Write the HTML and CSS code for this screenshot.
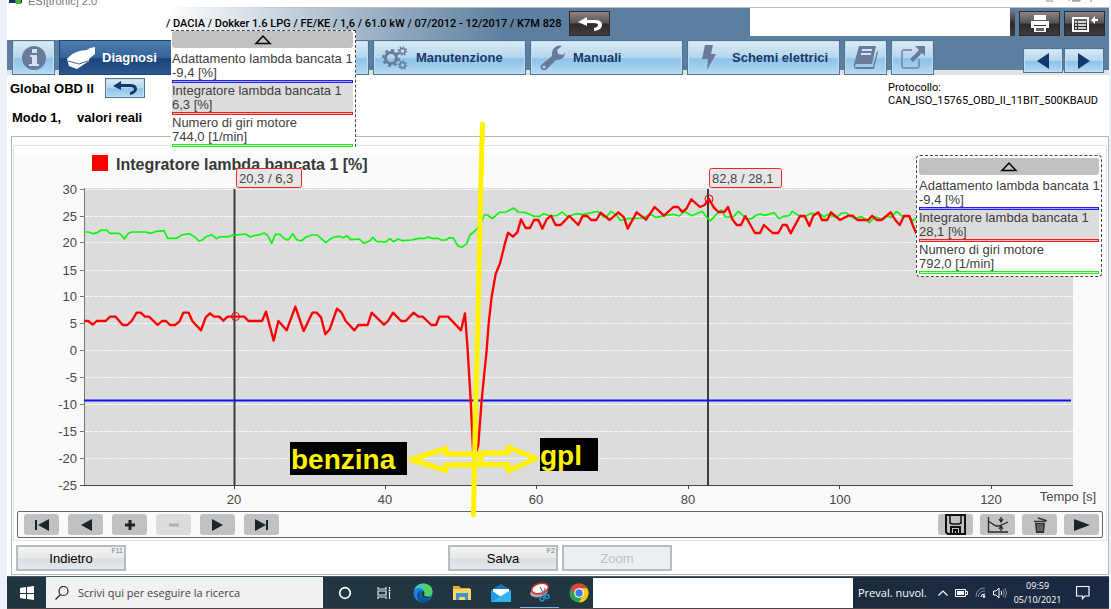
FILE: index.html
```html
<!DOCTYPE html>
<html lang="it">
<head>
<meta charset="utf-8">
<title>ESI[tronic] 2.0</title>
<link rel="stylesheet" href="styles.css">
</head>
<body>
<div class="window">
  <div class="titlebar">
    <svg class="app-icon" width="13" height="4" viewBox="0 0 13 4"><path d="M0 0h13v3H0z" fill="#15306b"/><path d="M6 0h6v4H7z" fill="#3ab52a"/></svg>
    <span class="title-text">ESI[tronic] 2.0</span>
    <svg class="win-controls" width="52" height="3" viewBox="0 0 52 3"><path d="M1 1h7M24 0v1M27 0h8v1h-8M46 0v2" stroke="#888" fill="none"/></svg>
  </div>

  <header class="vehicle-bar">
    <span class="vehicle">/ DACIA / Dokker 1.6 LPG / FE/KE / 1,6 / 61.0 kW / 07/2012 - 12/2017 / K7M 828</span>
    <button class="dark-btn" aria-label="Cambia veicolo"><svg width="26" height="16" viewBox="0 0 26 16"><path d="M1 6l9-5v3h8q7 0 7 5 0 5-8 6v-3q4-1 4-3 0-2-4-2h-7v3z" fill="#fff"/></svg></button>
    <div class="blank-top"></div>
    <div class="dark-sliver"></div>
    <button class="dark-btn" aria-label="Stampa"><svg width="20" height="18" viewBox="0 0 20 18"><path d="M4 0h12v5H4zM1 6h18v7h-3v-3H4v3H1z" fill="#fff"/><path d="M4 11h12v6H4z" fill="#fff"/><path d="M6 13h8v3H6z" fill="#6b6666"/></svg></button>
    <button class="dark-btn" aria-label="Elenco"><svg width="28" height="18" viewBox="0 0 28 18"><path d="M2 3h15v13H2z" fill="none" stroke="#fff" stroke-width="2"/><path d="M4 7h2m1 0h8M4 10h2m1 0h8M4 13h2m1 0h8" stroke="#fff" stroke-width="1.6"/><path d="M20 5l4-4v3h3v2h-3v3z" fill="#fff"/></svg></button>
  </header>

  <nav class="tabs">
    <button class="tab tab-icon" aria-label="Informazioni"><svg width="26" height="26" viewBox="0 0 26 26"><circle cx="13" cy="13" r="12" fill="#687b9a"/><path d="M11 4h5v4h-5zM9 10h7v9h2v2H8v-2h3v-7H9z" fill="#cfe3f4"/></svg></button>
    <button class="tab active"><svg width="30" height="24" viewBox="0 0 30 24"><path d="M1 13l2 7 8 3 12-8-9-10q-7 1-13 8z" fill="#fff"/><path d="M13 5l8-1 3-2 5-1v7l-5 4-2 3z" fill="#fff"/><path d="M2 15l11 3 9-3" fill="none" stroke="#42699a"/></svg><span>Diagnosi</span></button>
    <button class="tab" aria-label="Ricerca guasti"></button>
    <button class="tab"><svg width="26" height="24" viewBox="0 0 26 24"><g fill="none" stroke="#687b9a"><circle cx="9" cy="12" r="5.5" stroke-width="3"/><circle cx="9" cy="12" r="7.8" stroke-width="2.4" stroke-dasharray="3 3.1"/><circle cx="20.500" cy="5" r="2.600" stroke-width="1.500"/><circle cx="20.500" cy="5" r="4" stroke-width="1.500" stroke-dasharray="1.600 1.500"/><circle cx="20.500" cy="19" r="2.600" stroke-width="1.500"/><circle cx="20.500" cy="19" r="4" stroke-width="1.500" stroke-dasharray="1.600 1.500"/></g></svg><span>Manutenzione</span></button>
    <button class="tab"><svg width="26" height="26" viewBox="0 0 26 26"><path d="M2 20L13 11q-1-7 5-10 3-1 5 0l-5 4 1 4 5 1 2-3q0 8-9 8L7 25q-3 1-5-1-1-2 0-4z" fill="#687b9a"/><circle cx="5" cy="22" r="1.500" fill="#b4d5ef"/></svg><span>Manuali</span></button>
    <button class="tab tab-wide"><svg width="14" height="25" viewBox="0 0 14 25"><path d="M3 0h8L9 9h5L5 25l1-11H0z" fill="#687b9a"/></svg><span>Schemi elettrici</span></button>
    <button class="tab tab-icon" aria-label="Libro"><svg width="26" height="26" viewBox="0 0 26 26"><path d="M6 1h17l-4 18H4q-2 0-2 2t2 1h16l4-16 1 1-4 17H3q-3-1-2-5z" fill="#687b9a"/><path d="M9 5h10M8 9h10" stroke="#cfe3f4" stroke-width="2"/></svg></button>
    <button class="tab tab-icon" aria-label="Apri"><svg width="26" height="24" viewBox="0 0 26 24"><path d="M12 4H4Q2 4 2 6v14q0 2 2 2h13q2 0 2-2v-7" fill="none" stroke="#8295b0" stroke-width="2"/><path d="M15 0h10v10l-3-3-9 9-3-3 9-9z" fill="#687b9a"/></svg></button>
    <div class="history">
      <button class="blue-btn" aria-label="Precedente"><svg width="12" height="16" viewBox="0 0 12 16"><path d="M12 0v16L0 8z" fill="#12386e"/></svg></button>
      <button class="blue-btn" aria-label="Successivo"><svg width="12" height="16" viewBox="0 0 12 16"><path d="M0 0v16l12-8z" fill="#12386e"/></svg></button>
    </div>
  </nav>

  <section class="context">
    <div class="context-left">
      <div class="context-row"><strong>Global OBD II</strong><button class="blue-btn back" aria-label="Torna"><svg width="24" height="14" viewBox="0 0 24 14"><path d="M0 5l8-5v3h9q7 0 7 5 0 4-7 6v-3q4-1 4-3t-4-2H8v3z" fill="#12386e"/></svg></button></div>
      <div class="context-mode"><strong>Modo 1,</strong><strong>valori reali</strong></div>
    </div>
    <div class="protocol">Protocollo:<br>CAN_ISO_15765_OBD_II_11BIT_500KBAUD</div>
  </section>

  <main class="panel">
    <div class="chart-frame">
      <div class="chart">
        <svg class="plot" viewBox="14 153 1092 357">
          <rect x="84" y="188" width="989" height="298" fill="#dcdcdc"/>
          <path class="grid" d="M84 189.500H1073M84 216.500H1073M84 242.500H1073M84 270.500H1073M84 296.500H1073M84 323.500H1073M84 350.500H1073M84 377.500H1073M84 404.500H1073M84 431.500H1073M84 458.500H1073"/>
          <path d="M84.500 188V486M80 189.500h4M80 216.500h4M80 242.500h4M80 270.500h4M80 296.500h4M80 323.500h4M80 350.500h4M80 377.500h4M80 404.500h4M80 431.500h4M80 458.500h4" stroke="#777" fill="none"/>
          <path d="M80 485.500H1073M234.500 485v4M385.500 485v4M536.500 485v4M688.500 485v4M839.500 485v4M991.500 485v4" stroke="#444" fill="none"/>
          <g class="axis" text-anchor="end">
            <text x="77" y="194">30</text><text x="77" y="221">25</text><text x="77" y="247">20</text><text x="77" y="275">15</text><text x="77" y="301">10</text><text x="77" y="328">5</text><text x="77" y="355">0</text><text x="77" y="382">-5</text><text x="77" y="409">-10</text><text x="77" y="436">-15</text><text x="77" y="463">-20</text><text x="77" y="490">-25</text>
          </g>
          <g class="axis" text-anchor="middle">
            <text x="234" y="504">20</text><text x="385" y="504">40</text><text x="536" y="504">60</text><text x="688" y="504">80</text><text x="840" y="504">100</text><text x="991" y="504">120</text><text x="1068" y="501">Tempo [s]</text>
          </g>
          <rect x="92" y="155" width="16" height="16" fill="#f00"/>
          <text class="chart-title" x="116" y="170">Integratore lambda bancata 1 [%]</text>
          <path d="M234.500 189V485M708 189V485" stroke="#3c4040" stroke-width="2"/>
          <path d="M84 400.500H1071" stroke="#1010f0" stroke-width="2"/>
          <g transform="translate(0 150) scale(.33333)" fill="none" stroke-linejoin="round">
            <polyline stroke="#0cf50c" stroke-width="5" points="252,246 265,246 280,251 292,248 303,240 320,240 330,250 357,250 365,256 373,267 385,250 395,246 437,246 453,250 470,244 492,242 503,265 530,265 545,255 568,251 583,260 597,273 607,270 618,260 634,254 650,266 658,261 686,260 695,256 737,252 750,261 765,256 780,254 792,249 803,256 815,280 826,253 840,253 850,264 862,270 867,268 878,251 890,269 904,273 917,262 935,255 952,255 963,265 978,278 990,267 1003,261 1018,259 1030,263 1040,257 1052,269 1078,267 1092,280 1110,272 1118,262 1130,274 1157,276 1170,266 1180,275 1195,267 1207,272 1235,270 1255,265 1275,265 1285,261 1298,265 1315,265 1323,270 1338,270 1348,263 1360,264 1373,287 1385,292 1400,281 1410,255 1428,240 1440,226 1453,195 1463,195 1477,206 1498,187 1518,186 1541,174 1555,186 1578,188 1602,199 1620,199 1631,191 1650,198 1670,197 1687,186 1702,200 1728,191 1750,193 1793,184 1810,200 1820,200 1833,184 1850,196 1860,211 1885,206 1930,204 1950,193 1968,202 1995,197 2020,193 2038,198 2053,184 2075,197 2107,184 2120,202 2132,212 2150,192 2164,180 2176,201 2200,201 2215,184 2240,207 2255,206 2270,195 2282,192 2295,196 2323,188 2337,206 2350,199 2367,197 2377,184 2400,199 2415,200 2432,190 2460,192 2472,201 2482,193 2510,202 2525,189 2540,189 2552,200 2565,205 2585,200 2608,218 2625,200 2645,207 2660,198 2675,202 2689,184 2710,201 2725,198 2738,212 2750,204"/>
            <polyline stroke="#f00" stroke-width="7" points="252,513 265,513 278,524 290,513 317,513 330,500 347,500 368,525 382,525 395,513 410,488 422,488 435,500 447,500 473,525 486,513 498,513 510,525 525,525 538,515 550,488 566,488 577,513 603,541 617,502 630,490 642,500 658,500 670,512 683,500 733,500 745,513 786,513 798,485 821,572 835,513 860,541 886,470 911,543 937,488 950,488 963,502 976,553 989,538 1011,476 1024,487 1037,513 1063,541 1075,525 1103,525 1115,488 1152,524 1164,513 1179,488 1203,513 1217,513 1241,488 1255,500 1268,500 1294,525 1308,525 1318,500 1344,500 1383,541 1395,490 1403,600 1412,750 1420,920 1424,925 1435,885 1445,750 1460,600 1466,520 1475,440 1487,372 1500,340 1515,280 1524,248 1539,260 1552,247 1563,208 1577,234 1590,234 1602,210 1615,210 1627,236 1640,208 1653,197 1667,225 1682,225 1708,198 1735,225 1748,198 1762,198 1773,210 1789,210 1802,188 1829,210 1855,187 1872,202 1883,236 1910,187 1938,209 1964,171 1992,197 2020,171 2034,171 2047,186 2060,175 2074,148 2100,171 2114,165 2127,147 2142,173 2155,186 2173,186 2184,171 2197,208 2210,225 2223,225 2236,198 2265,249 2280,249 2292,225 2318,249 2335,249 2348,225 2360,225 2372,250 2400,198 2414,198 2428,228 2440,197 2455,187 2466,210 2482,210 2493,187 2520,210 2545,197 2558,197 2572,210 2605,210 2616,197 2630,210 2645,210 2672,187 2686,210 2699,225 2712,198 2728,198 2738,225 2750,252"/>
          </g>
          <circle cx="235.500" cy="316.500" r="4" fill="none" stroke="#e00"/>
          <circle cx="709" cy="199" r="4" fill="none" stroke="#e00"/>
          <g fill="#e6e6e6" stroke="#f22"><rect x="236.500" y="168.500" width="65" height="19" rx="2"/><rect x="709.500" y="168.500" width="72" height="19" rx="2"/></g>
          <g class="axis"><text x="239" y="183">20,3 / 6,3</text><text x="712" y="183">82,8 / 28,1</text></g>
          <g fill="none" stroke="#fff200" stroke-width="5" stroke-linejoin="round" stroke-linecap="round">
            <path d="M482.500 124L481.500 160 480 220 478 320 475.500 410 473.500 515"/>
            <path d="M478 454H446v-5.500L411 459.500l35 11V465H478M481 453h27v-6l28 11.500-28 12.500v-6.500H481z"/>
          </g>
          <rect x="290" y="442" width="117" height="33"/>
          <rect x="540" y="438" width="58" height="33"/>
          <g class="note"><text x="291" y="469">benzina</text><text x="540" y="465">gpl</text></g>
        </svg>
        <div class="legend legend-right">
          <button class="legend-handle" aria-label="Comprimi"><svg width="18" height="11" viewBox="0 0 18 11"><path d="M2 9.500L9 2l7 7.500z" fill="none" stroke="#000" stroke-width="1.500"/></svg></button>
          <div class="entry blue">Adattamento lambda bancata 1<br>-9,4 [%]</div>
          <div class="entry red">Integratore lambda bancata 1<br>28,1 [%]</div>
          <div class="entry green">Numero di giri motore<br>792,0 [1/min]</div>
        </div>
      </div>
      <div class="toolbar">
        <div class="tool-group nav-group">
          <button class="tool" aria-label="Inizio"><svg width="14" height="12" viewBox="0 0 14 12"><path d="M0 1h2v10H0zM14 0v12L3 6z" fill="#1b2428"/></svg></button>
          <button class="tool" aria-label="Indietro"><svg width="12" height="12" viewBox="0 0 12 12"><path d="M12 0v12L1 6z" fill="#1b2428"/></svg></button>
          <button class="tool" aria-label="Ingrandisci"><svg width="12" height="12" viewBox="0 0 12 12"><path d="M6 1v10M1 6h10" stroke="#1b2428" stroke-width="3"/></svg></button>
          <button class="tool" disabled aria-label="Riduci"><svg width="12" height="12" viewBox="0 0 12 12"><path d="M1 6h10" stroke="#b0b0b0" stroke-width="3"/></svg></button>
          <button class="tool" aria-label="Avanti"><svg width="12" height="12" viewBox="0 0 12 12"><path d="M0 0v12l11-6z" fill="#1b2428"/></svg></button>
          <button class="tool" aria-label="Fine"><svg width="14" height="12" viewBox="0 0 14 12"><path d="M11 1h2v10h-2zM0 0v12l11-6z" fill="#1b2428"/></svg></button>
        </div>
        <div class="tool-group">
          <button class="tool" aria-label="Salva dati"><svg width="21" height="21" viewBox="0 0 21 21"><path d="M1 1h19v19H3l-2-2z" fill="none" stroke="#111" stroke-width="2"/><path d="M5 2v7l2 1h7l2-1V2" fill="none" stroke="#111" stroke-width="1.500"/><path d="M6 19v-6h9v6M9 19v-3h3v3" fill="none" stroke="#111" stroke-width="2"/></svg></button>
          <button class="tool" aria-label="Grafico"><svg width="22" height="18" viewBox="0 0 22 18"><path d="M1.500 1v15H21M1 5l8 5h3l9-4" fill="none" stroke="#20282a" stroke-width="1.300"/><path d="M14 1v5m-2-3l2 3 2-3M14 15v-5m-2 3l2-3 2 3" fill="none" stroke="#20282a" stroke-width="1.300"/></svg></button>
          <button class="tool" aria-label="Elimina"><svg width="14" height="16" viewBox="0 0 14 16"><path d="M1 4.500h11l1-1-8-2.500" fill="none" stroke="#333" stroke-width="1.500"/><path d="M2 6h10l-1 10H3z" fill="#333"/><path d="M5 7v7M7 7v7M9 7v7" stroke="#aaa" stroke-width=".8"/></svg></button>
          <button class="tool" aria-label="Riproduci"><svg width="16" height="12" viewBox="0 0 16 12"><path d="M0 0v12l16-6z" fill="#1b2428"/></svg></button>
        </div>
      </div>
    </div>
    <div class="actions">
      <div><button class="action">Indietro<span class="key">F11</span></button></div>
      <div class="action-pair"><button class="action">Salva<span class="key">F2</span></button><button class="action" disabled>Zoom</button></div>
    </div>
  </main>

  <div class="legend legend-left">
    <button class="legend-handle" aria-label="Comprimi"><svg width="18" height="11" viewBox="0 0 18 11"><path d="M2 9.500L9 2l7 7.500z" fill="none" stroke="#000" stroke-width="1.500"/></svg></button>
    <div class="entry blue">Adattamento lambda bancata 1<br>-9,4 [%]</div>
    <div class="entry red">Integratore lambda bancata 1<br>6,3 [%]</div>
    <div class="entry green">Numero di giri motore<br>744,0 [1/min]</div>
  </div>

  <footer class="taskbar">
    <button class="start" aria-label="Start"><svg width="14" height="14" viewBox="0 0 14 14"><path d="M0 2l6-1v6H0zM7 1l7-1v7H7zM0 8h6v5l-6-1zM7 8h7v6l-7-1z" fill="#fff"/></svg></button>
    <label class="search"><svg width="14" height="14" viewBox="0 0 14 14"><circle cx="8.500" cy="5" r="4.500" fill="none" stroke="#222" stroke-width="1.200"/><path d="M5.500 8.500L0.500 13.500" stroke="#222" stroke-width="1.200"/></svg><input type="text" placeholder="Scrivi qui per eseguire la ricerca" aria-label="Ricerca"></label>
    <div class="apps">
      <button class="app" aria-label="Cortana"><svg width="14" height="14" viewBox="0 0 14 14"><circle cx="7" cy="7" r="5.300" fill="none" stroke="#fff" stroke-width="1.700"/></svg></button>
      <button class="app" aria-label="Visualizzazione attività"><svg width="14" height="14" viewBox="0 0 14 14"><path d="M1 1v2h8V1M1 13v-2h8v2M1 5h8v4H1zM12.500 1v2M12.500 6v7" fill="none" stroke="#eee" stroke-width="1.200"/><circle cx="12.500" cy="4.500" r="1" fill="#fff"/></svg></button>
      <button class="app" aria-label="Edge"><svg width="20" height="20" viewBox="0 0 20 20"><circle cx="10" cy="10" r="9.500" fill="#1782d8"/><path d="M1 8Q3 0 11 .5q8 1 8.500 8-.5 5-6 5-3-.5-2-3Q11 5 6 5 2 5 1 8z" fill="#43c8b8"/><path d="M11 .5q8 1 8.500 8-.5 5-6 5-3-.5-2-3z" fill="#50d060"/><path d="M8 8q-2 6 4 8 4 1 6-1-3 5-9 4.500Q4 18 4 13t4-5z" fill="#0c529c"/><path d="M13 13.500q-3-.5-1.500-3.500 0-2-2-2-2 3 0 6 4 3 8.500.5-2-.5-5-1z" fill="#223640"/></svg></button>
      <button class="app" aria-label="Esplora file"><svg width="18" height="17" viewBox="0 0 18 17"><path d="M0 2h6l2 2h9v12H0z" fill="#e9a92c"/><path d="M0 5h18v11H0z" fill="#ffd666"/><path d="M3 9h12v7h-3v-3H6v3H3z" fill="#3b93dc"/></svg></button>
      <button class="app" aria-label="Posta"><svg width="20" height="18" viewBox="0 0 20 18"><path d="M0 6l10-6 10 6v12H0z" fill="#1572c4"/><path d="M2 5h16v7H2z" fill="#fff"/><path d="M0 6l10 7L0 18z" fill="#1d9be8"/><path d="M20 6L0 18h20z" fill="#31b4f2"/></svg></button>
      <button class="app open" aria-label="Strumento di cattura"><svg width="20" height="20" viewBox="0 0 20 20"><ellipse cx="9" cy="10" rx="9" ry="5" transform="rotate(-15 9 10)" fill="#aaa"/><ellipse cx="10" cy="6.500" rx="8.500" ry="5" transform="rotate(-15 10 6.500)" fill="#fff" stroke="#d42a30" stroke-width="1.500"/><path d="M10 5l5 9M15 6l-2 8" stroke="#777" stroke-width="1.200"/><g fill="none" stroke="#2a8fd0" stroke-width="1.600"><circle cx="12" cy="17" r="2"/><circle cx="17" cy="14.500" r="2"/></g></svg></button>
      <button class="app" aria-label="Chrome"><svg width="20" height="20" viewBox="0 0 20 20"><circle cx="10" cy="10" r="9.500" fill="#2ba24c"/><path d="M1.800 5.200A9.500 9.500 0 0 1 18.200 5.200H10L6 12z" fill="#e04434"/><path d="M18.200 5.200A9.500 9.500 0 0 1 10 19.500l4-7.500-4-6.800z" fill="#fbc81a"/><circle cx="10" cy="10" r="4.800" fill="#fff"/><circle cx="10" cy="10" r="3.700" fill="#3d7fe8"/></svg></button>
    </div>
    <div class="blank-bottom"></div>
    <div class="tray">
      <span class="tray-text">Preval. nuvol.</span>
      <svg width="10" height="6" viewBox="0 0 10 6"><path d="M.5 5.500L5 1l4.500 4.500" fill="none" stroke="#fff" stroke-width="1.200"/></svg>
      <svg width="13" height="8" viewBox="0 0 13 8"><path d="M.5.500h10v7H.5zM11 2.500h1.500v3H11" fill="none" stroke="#fff"/><path d="M2 2h7v4H2z" fill="#fff"/></svg>
      <svg width="11" height="11" viewBox="0 0 11 11"><g fill="none"><path d="M1 10Q1 1 10 1M3.500 10q0-6 6.500-6" stroke="#8790a0"/><path d="M6 10q0-3 4-3" stroke="#fff"/></g><circle cx="9" cy="9.500" r="1.300" fill="#fff"/></svg>
      <svg width="14" height="12" viewBox="0 0 14 12"><path d="M.5 4H3l3-3v10L3 8H.5z" fill="none" stroke="#fff"/><path d="M8 4q1.500 2 0 4" fill="none" stroke="#fff"/><path d="M10 2.500q2.500 3.500 0 7M12 1q3 5 0 10" fill="none" stroke="#8790a0"/></svg>
      <div class="clock">09:59<br>05/10/2021</div>
      <svg class="notice" width="14" height="14" viewBox="0 0 14 14"><path d="M.5.500h12.500v9.500H9L6.500 12.500 6.500 10H.5z" fill="none" stroke="#fff" stroke-width="1.200"/></svg>
    </div>
  </footer>
</div>
</body>
</html>
```

FILE: styles.css
```css
*, *::after { box-sizing: border-box; }

body {
  margin: 0;
  padding: 0 2px 0 7px;
  background: #edf1fb;
  font-family: "Liberation Sans", Arial, sans-serif;
  font-size: 13px;
  color: #000;
}

button {
  font: inherit;
  color: inherit;
  padding: 0;
  border: 0;
  display: flex;
  align-items: center;
  justify-content: center;
}

svg { display: block; flex: none; }

.window {
  position: relative;
  background: #fff;
  border-bottom: 1px solid #4a4245;
}

.titlebar {
  display: flex;
  align-items: flex-end;
  height: 7px;
  overflow: hidden;
  font-size: 11px;
  line-height: 12px;
  color: #777;
}
.app-icon { align-self: flex-start; margin: 0 6px 0 2px; }
.win-controls { align-self: flex-start; margin: 0 12px 0 auto; }

.vehicle-bar {
  display: flex;
  align-items: flex-start;
  height: 33px;
  padding-right: 4px;
  border-top: 1px solid #b3c0cc;
  border-image: linear-gradient(90deg, #fff 160px, #b3c0cc 300px) 1;
  background: linear-gradient(90deg, #fff 160px, #5c7f9f 500px);
}
.vehicle {
  padding-left: 159px;
  font-family: Roboto, "Liberation Sans", sans-serif;
  font-size: 11px;
  font-weight: 500;
  line-height: 32px;
  white-space: nowrap;
}
.dark-btn {
  width: 41px;
  height: 25px;
  margin: 3px 0 0 4px;
  flex: none;
  border: 1px solid #2c2a2c;
  background: linear-gradient(#8c8484, #585254 48%, #2e292b 52%, #423c3e);
}
.vehicle + .dark-btn { margin-left: 8px; }
.blank-top { width: 260px; height: 28px; margin-left: auto; background: #fff; }
.dark-sliver {
  width: 5px;
  height: 25px;
  margin-top: 3px;
  background: linear-gradient(#777072, #2e292b 52%, #423c3e);
}

.tabs {
  display: flex;
  gap: 4px;
  height: 35px;
  padding: 0 5px;
  background: linear-gradient(#5c7f9f 30px, #e2e2e2 30px);
}
.tab, .blue-btn {
  border: 1px solid #4d7597;
  background: linear-gradient(#dcebf5, #b5d5ec 50%, #8cc3ea 54%, #b5daf2);
  box-shadow: inset 0 0 0 1px #c3def0;
}
.tab {
  flex: 0 1 153px;
  gap: 8px;
  padding-left: 8px;
  justify-content: flex-start;
  font-weight: bold;
  color: #17386b;
}
.tab-wide { padding-left: 14px; gap: 16px; }
.tab-icon { flex: none; width: 43px; padding: 0; justify-content: center; }
.tab.active {
  gap: 6px;
  padding-left: 6px;
  color: #fff;
  border-color: #1d4477;
  background: linear-gradient(#4f7dac, #34639a 50%, #1d4379 54%, #2c578f);
  box-shadow: none;
}
.history { display: flex; gap: 1px; margin-left: auto; padding-top: 8px; }
.blue-btn { width: 40px; height: 25px; }

.context { display: flex; justify-content: space-between; height: 61px; padding: 3px 11px 0 3px; }
.context-row { display: flex; align-items: center; gap: 11px; height: 20px; }
.blue-btn.back { height: 20px; }
.context-mode { display: flex; gap: 16px; padding: 12px 0 0 2px; line-height: 16px; }
.protocol { padding-top: 3px; font-family: Roboto, "Liberation Sans", sans-serif; font-size: 11px; line-height: 13px; }

.panel { margin-left: 4px; border: 1px solid #b6b6b6; }
.chart-frame { margin: 8px 1px 0; padding: 7px 0 2px; border: 1px solid #e4e4e4; }
.chart { position: relative; background: #fafafa; }
.plot { position: relative; z-index: 1; width: 100%; height: auto; overflow: visible; pointer-events: none; }
.grid { stroke: #f6f6f6; stroke-dasharray: 4 1; fill: none; }
.axis { font-size: 13px; fill: #484848; }
.chart-title { font-size: 16px; font-weight: bold; fill: #383838; }
.note { font-size: 28px; font-weight: bold; fill: #fff200; }

.legend {
  position: absolute;
  z-index: 2;
  width: 186px;
  padding: 2px;
  border: 1px dashed #444;
  border-radius: 4px;
  background: #fff;
  font-size: 13px;
  line-height: 14px;
  color: #404040;
  white-space: nowrap;
}
.legend-right { top: 2px; right: 4px; }
.legend-left {
  top: 30px;
  left: 164px;
  width: 185px;
  padding: 0 2px 0 1px;
  border-width: 1px 1px 0 0;
  border-radius: 0;
}
.legend-handle { width: 100%; height: 17px; margin-bottom: 3px; border-radius: 3px; background: #c1c1c1; }
.entry { padding-top: 1px; }
.entry::after { content: ""; display: block; height: 3px; border: 1px solid; }
.blue::after { border-color: #2020f0; background: #a8a8ff; }
.red { background: #dcdcdc; }
.red::after { border-color: #f02020; background: #ffb4b4; }
.green::after { border-color: #20ee20; background: #c8ffc8; }

.toolbar {
  display: flex;
  justify-content: space-between;
  margin: 1px 3px 0;
  padding: 2px 3px 2px 6px;
  border: 1px solid #666;
  border-radius: 2px;
  background: #fafafa;
}
.tool-group { display: flex; gap: 7px; }
.nav-group { gap: 9px; }
.tool { width: 35px; height: 21px; border-radius: 3px; background: #c1c1c1; }
.tool:disabled { background: #dcdcdc; }

.actions { display: grid; grid-template-columns: 1fr auto 1fr; padding: 4px 4px 3px; }
.action-pair { display: flex; gap: 4px; }
.action {
  position: relative;
  width: 110px;
  height: 26px;
  border: 2px solid #b5bcc2;
  background: linear-gradient(#f4f4f4, #e8e8e9 50%, #d9dde1 54%, #e3e9ef);
}
.action:disabled { color: #c0c0c0; background: #eceff1; }
.key { position: absolute; top: 0; right: 1px; font-size: 7px; line-height: 8px; color: #777; }

.taskbar { display: flex; height: 32px; margin-top: 1px; border-top: 1px solid #4b5c66; background: #fff; font-family: "Open Sans", "Noto Sans", sans-serif; }
.start { width: 39px; background: #213540; }
.search { display: flex; align-items: center; gap: 9px; width: 277px; padding-left: 9px; background: #f1f1f1; }
.search input {
  flex: 1;
  min-width: 0;
  padding: 0;
  border: 0;
  outline: 0;
  background: none;
  font-family: inherit;
  font-size: 11px;
}
.search input::placeholder { color: #444; opacity: 1; }
.apps { display: flex; width: 270px; padding-left: 2px; overflow: hidden; background: #213640; }
.app { flex: none; width: 39px; background: none; }
.app.open { border-bottom: 1px solid #76b9ed; }
.blank-bottom { flex: 1; border-top: 1px solid #213640; }
.tray {
  display: flex;
  align-items: center;
  gap: 7px;
  width: 256px;
  padding-left: 5px;
  background: linear-gradient(90deg, #1c2c3c, #1b2844);
  font-size: 11px;
  color: #fff;
  white-space: nowrap;
}
.tray-text { margin-right: 4px; }
.clock { font-size: 9px; line-height: 14px; text-align: center; }
.notice { margin-left: 8px; }
```
